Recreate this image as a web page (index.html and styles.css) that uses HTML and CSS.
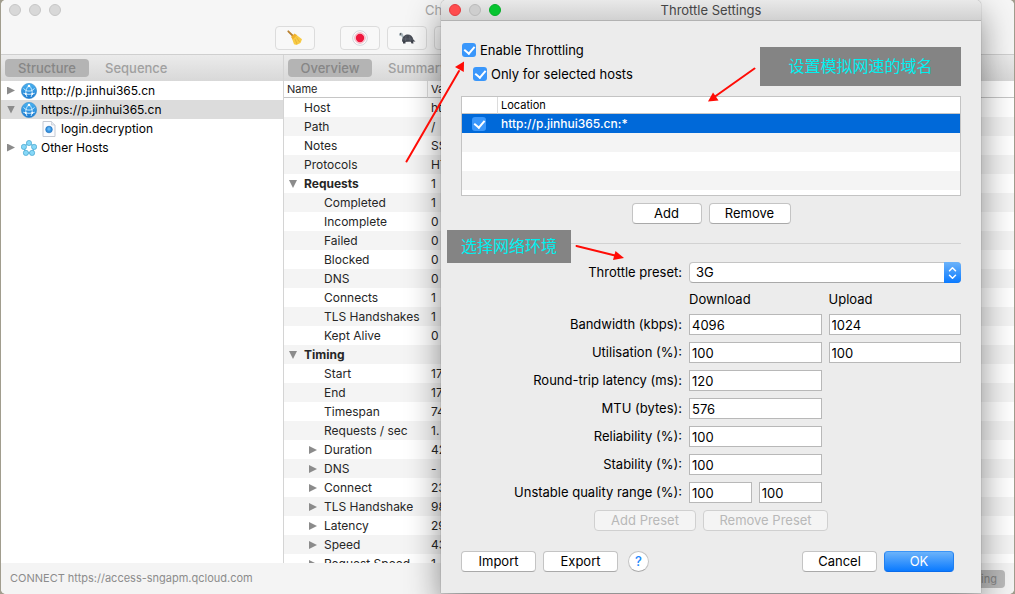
FILE: index.html
```
<!DOCTYPE html>
<html lang="en">
<head>
<meta charset="utf-8">
<title>Throttle Settings</title>
<link rel="stylesheet" href="styles.css">
</head>
<body>
<svg class="defs" aria-hidden="true">
  <defs>
    <linearGradient id="globeFill" x1="0" y1="0" x2="0" y2="1"><stop offset="0" stop-color="#49b4f2"/><stop offset="1" stop-color="#1c78cf"/></linearGradient>
    <symbol id="globe" viewBox="0 0 16 16">
      <circle cx="8" cy="8" r="7.600" fill="url(#globeFill)" stroke="#3b8ecb" stroke-width=".7"/>
      <g fill="none" stroke="#d6f0ff" stroke-width=".9">
        <path d="M7.500 3C5.400 5 4.600 8 4.800 11.500M8.500 3c2.100 2 2.900 5 2.700 8.500M2.200 10.200c3.500 1.500 8.100 1.500 11.600 0M5 7.500c2 .8 4 .8 6 0M2.500 5.500 5 7.500M13.500 5.500 11 7.500M5 11.500l1 2.500M11 11.500 10 14"/>
      </g>
      <g fill="#fff"><circle cx="8" cy="3" r="1.200"/><circle cx="4.800" cy="11" r="1"/><circle cx="11.200" cy="11" r="1"/></g>
    </symbol>
  </defs>
</svg>
<div class="stage">
  <main class="window">
    <header class="toolbar">
      <div class="titlebar">
        <span class="lights"><i class="light"></i><i class="light"></i><i class="light"></i></span>
        <span class="window-title">Charles</span>
      </div>
      <div class="tools">
        <button class="tool tool-first" aria-label="Clear">
          <svg width="16" height="16" viewBox="0 0 16 16"><path d="M1.300 1.300 6 6" stroke="#b9802f" stroke-width="1.800" stroke-linecap="round"/><path d="M5 8.500 9 4.600 15 9.300 13.500 13 9.500 15 7 14.300Z" fill="#f8cb45"/><path d="M4 7 7.600 3.500 9.900 5.200 5.800 9.500Z" fill="#f0b12c"/><path d="m8 9 2 5M9.600 7.500l3 4.500" stroke="#dca52e" stroke-width=".6"/></svg>
        </button>
        <button class="tool" aria-label="Record">
          <svg width="16" height="16" viewBox="0 0 16 16"><circle cx="8" cy="8" r="7.300" fill="#fff" stroke="#c6cbd3" stroke-width=".8"/><circle cx="8" cy="8" r="5.400" fill="#fbd4dc" stroke="#e798a8" stroke-width=".6"/><circle cx="8" cy="8" r="4.200" fill="#ef173d"/></svg>
        </button>
        <button class="tool" aria-label="Throttle">
          <svg width="18" height="16" viewBox="0 0 18 16"><path d="M1 4.500C1 2.400 4.500 2 5 4.300L6.300 8 4.800 8.500 3.500 6.200C2 6.300 1 5.800 1 4.500Z" fill="#aab7bd"/><circle cx="2.600" cy="4" r=".7" fill="#333"/><path d="M4 10.500C5 3 14 2.500 15.500 9.800L17.500 11.500 4.500 12Z" fill="#474b54"/><path d="M5 11h2.500v2.500H5zM12.500 11H15l.5 2.500h-2z" fill="#3d414a"/><path d="M5 9h10M8 5.500l-.5 5.500M11.500 5.500l.8 5.500" stroke="#666b75" stroke-width=".6"/></svg>
        </button>
        <button class="tool" aria-label="Breakpoints"></button>
      </div>
    </header>
    <div class="panes">
      <section class="pane tree-pane">
        <nav class="tabs"><button class="tab active">Structure</button><button class="tab">Sequence</button></nav>
        <ul class="tree">
          <li><i class="tri"></i><svg class="ico"><use href="#globe"/></svg>http://p.jinhui365.cn</li>
          <li class="picked"><i class="tri open"></i><svg class="ico"><use href="#globe"/></svg>https://p.jinhui365.cn</li>
          <li class="child"><svg class="ico" viewBox="0 0 16 16"><path d="M2 .5h8.500L14 4v11.500H2z" fill="#fbfcff" stroke="#c3c8d2"/><path d="M10.500.5V4H14" fill="#e6eaf2" stroke="#c3c8d2" stroke-width=".7"/><circle cx="8" cy="8.500" r="3.300" fill="#3793e0" stroke="#2372bd" stroke-width=".7"/><circle cx="8" cy="8" r="1.700" fill="#63b7f4"/></svg>login.decryption</li>
          <li><i class="tri"></i><svg class="ico" viewBox="0 0 16 16"><circle cx="8" cy="8.500" r="4.600" fill="none" stroke="#6fbfe2" stroke-width="1.500"/><g fill="#86d8f8" stroke="#4ba6cf" stroke-width=".7"><circle cx="8" cy="3" r="2.600"/><circle cx="2.900" cy="6.900" r="2.600"/><circle cx="13.100" cy="6.900" r="2.600"/><circle cx="4.900" cy="12.900" r="2.600"/><circle cx="11.100" cy="12.900" r="2.600"/></g></svg>Other Hosts</li>
        </ul>
      </section>
      <section class="pane info-pane">
        <nav class="tabs"><button class="tab active">Overview</button><button class="tab">Summary</button></nav>
        <div class="table-clip">
          <table class="info">
            <thead><tr><th>Name</th><th>Value</th></tr></thead>
            <tbody>
              <tr><td class="l1">Host</td><td>https</td></tr>
              <tr><td class="l1">Path</td><td>/</td></tr>
              <tr><td class="l1">Notes</td><td>SSL</td></tr>
              <tr><td class="l1">Protocols</td><td>HTTP</td></tr>
              <tr><td class="l1 group"><i class="tri open"></i>Requests</td><td>1</td></tr>
              <tr><td class="l2">Completed</td><td>1</td></tr>
              <tr><td class="l2">Incomplete</td><td>0</td></tr>
              <tr><td class="l2">Failed</td><td>0</td></tr>
              <tr><td class="l2">Blocked</td><td>0</td></tr>
              <tr><td class="l2">DNS</td><td>0</td></tr>
              <tr><td class="l2">Connects</td><td>1</td></tr>
              <tr><td class="l2">TLS Handshakes</td><td>1</td></tr>
              <tr><td class="l2">Kept Alive</td><td>0</td></tr>
              <tr><td class="l1 group"><i class="tri open"></i>Timing</td><td></td></tr>
              <tr><td class="l2">Start</td><td>17</td></tr>
              <tr><td class="l2">End</td><td>17</td></tr>
              <tr><td class="l2">Timespan</td><td>74</td></tr>
              <tr><td class="l2">Requests / sec</td><td>1.</td></tr>
              <tr><td class="l2"><i class="tri"></i>Duration</td><td>42</td></tr>
              <tr><td class="l2"><i class="tri"></i>DNS</td><td>-</td></tr>
              <tr><td class="l2"><i class="tri"></i>Connect</td><td>23</td></tr>
              <tr><td class="l2"><i class="tri"></i>TLS Handshake</td><td>98</td></tr>
              <tr><td class="l2"><i class="tri"></i>Latency</td><td>29</td></tr>
              <tr><td class="l2"><i class="tri"></i>Speed</td><td>43</td></tr>
              <tr><td class="l2"><i class="tri"></i>Request Speed</td><td>1</td></tr>
            </tbody>
          </table>
        </div>
      </section>
    </div>
    <footer class="status"><span>CONNECT https://access-sngapm.qcloud.com</span><span class="pill">Recording</span></footer>
  </main>

  <form class="dialog" role="dialog" aria-labelledby="dlg-title">
    <header class="dialog-bar">
      <span class="lights"><i class="light red"></i><i class="light"></i><i class="light green"></i></span>
      <h1 id="dlg-title">Throttle Settings</h1>
    </header>
    <div class="dialog-body">
      <label class="check"><input type="checkbox" checked>Enable Throttling</label>
      <label class="check nested"><input type="checkbox" checked>Only for selected hosts</label>
      <div class="hosts-box">
        <table class="hosts">
          <thead><tr><th></th><th>Location</th></tr></thead>
          <tbody>
            <tr class="chosen"><td><input type="checkbox" checked aria-label="http://p.jinhui365.cn:*"></td><td>http://p.jinhui365.cn:*</td></tr>
            <tr><td></td><td></td></tr><tr><td></td><td></td></tr><tr><td></td><td></td></tr>
          </tbody>
        </table>
      </div>
      <div class="row center"><button type="button" class="btn w-s">Add</button><button type="button" class="btn w-l">Remove</button></div>
      <hr>
      <div class="fields">
        <label for="preset">Throttle preset:</label>
        <div class="select"><select id="preset"><option>3G</option></select><span class="stepper"><svg width="9" height="14" viewBox="0 0 9 14" fill="none" stroke="#fff" stroke-width="1.500" stroke-linecap="round" stroke-linejoin="round"><path d="m1.500 4.700 3-3 3 3M1.500 9.300l3 3 3-3"/></svg></span></div>
        <span></span><span class="head">Download</span><span class="head">Upload</span>
        <label for="bw">Bandwidth (kbps):</label><input id="bw" value="4096"><input aria-label="Upload bandwidth" value="1024">
        <label for="ut">Utilisation (%):</label><input id="ut" value="100"><input aria-label="Upload utilisation" value="100">
        <label for="rt">Round-trip latency (ms):</label><input id="rt" value="120"><span></span>
        <label for="mtu">MTU (bytes):</label><input id="mtu" value="576"><span></span>
        <label for="rel">Reliability (%):</label><input id="rel" value="100"><span></span>
        <label for="st">Stability (%):</label><input id="st" value="100"><span></span>
        <label for="uq">Unstable quality range (%):</label><div class="pair"><input id="uq" value="100"><input aria-label="Range maximum" value="100"></div><span></span>
      </div>
      <div class="row center"><button type="button" class="btn w-xl" disabled>Add Preset</button><button type="button" class="btn w-xxl" disabled>Remove Preset</button></div>
      <div class="row actions">
        <button type="button" class="btn w-m">Import</button><button type="button" class="btn w-m">Export</button><button type="button" class="help">?</button>
        <span class="grow"></span>
        <button type="button" class="btn w-m">Cancel</button><button type="button" class="btn w-s primary">OK</button>
      </div>
    </div>
  </form>

  <div class="note note-hosts" lang="zh">设置模拟网速的域名</div>
  <div class="note note-preset" lang="zh">选择网络环境</div>
  <svg class="arrows" width="1015" height="594" viewBox="0 0 1015 594" aria-hidden="true">
    <g stroke="#ff0c06" stroke-width="2" stroke-linecap="round"><path d="M406.500 161.500 459 71M754.500 68.500 715 96.500M576.500 246 615 255.500"/></g>
    <g fill="#ff0c06"><path d="M464 61.500 463.800 72 455 67Z"/><path d="M708 101.500 713 92.500 718.500 100.500Z"/><path d="M624 258 615.500 251 613 260Z"/></g>
  </svg>
</div>
</body>
</html>
```
FILE: styles.css
```
* { box-sizing: border-box; }
body { margin: 0; background: #a19d8e; color: #262626; font: 13px/19px Inter, "Noto Sans CJK SC", sans-serif; }
button, input, select { font: inherit; color: inherit; margin: 0; }
.defs { position: absolute; width: 0; height: 0; }
.stage { position: relative; height: 100vh; overflow: hidden; padding: 0 1px; }

.window { display: flex; flex-direction: column; height: 100%; border-radius: 5px; overflow: hidden; background: #fff; }
.toolbar { flex: none; height: 55px; background: #f6f6f6; border-bottom: 1px solid #cfcfcf; }
.titlebar { display: flex; align-items: center; height: 20px; padding-left: 8px; }
.lights { display: flex; gap: 8px; }
.light { width: 12px; height: 12px; border-radius: 50%; background: #d8d8d8; border: 1px solid #c6c6c6; }
.light.red { background: #ff4c4e; border-color: #e2393e; }
.light.green { background: #06c530; border-color: #05ad29; }
.window-title { margin-left: 364px; color: #a6a6a6; }
.tools { display: flex; gap: 7px; padding: 6px 0 0 274px; }
.tool { display: grid; place-items: center; width: 40px; height: 24px; padding: 0; border: 1px solid #dcdcdc; border-radius: 4px; background: #f8f8f8; }
.tool-first { margin-right: 18px; }

.panes { display: flex; flex: 1; min-height: 0; }
.pane { display: flex; flex-direction: column; min-width: 0; }
.tree-pane { flex: none; width: 283px; border-right: 1px solid #d4d4d4; }
.info-pane { flex: 1; }
.tabs { display: flex; flex: none; align-items: center; gap: 6px; height: 26px; padding-left: 4px; background: linear-gradient(#ebebeb, #d8d8d8); }
.tab { height: 18px; padding: 0 10px; border: 0; border-radius: 4px; background: none; color: #a0a0a0; font-weight: 500; line-height: 18px; }
.tab.active { min-width: 84px; background: #b4b4b4; color: #868686; }

.tree { margin: 0; padding: 0; list-style: none; color: #000; font-size: 12px; }
.tree li { display: flex; align-items: center; height: 19px; padding-left: 6px; }
.tree .picked { background: #dcdcdc; }
.tree .child { padding-left: 40px; }
.ico { width: 16px; height: 16px; margin-right: 4px; }
.tree .tri { margin-right: 6px; }
.tri { display: inline-block; width: 8px; height: 8px; background: #8b8b8b; clip-path: polygon(0 0, 100% 50%, 0 100%); }
.tri.open { clip-path: polygon(0 0, 100% 0, 50% 100%); }

.table-clip { flex: 1; min-height: 0; overflow: hidden; }
table { width: 100%; border-collapse: separate; border-spacing: 0; table-layout: fixed; font-size: 12px; }
th { font-weight: 400; text-align: left; padding: 0; }
td { height: 19px; padding: 0; white-space: nowrap; }
.info th, .hosts th { height: 17px; padding-left: 3px; border-bottom: 1px solid #c6c6c6; font-size: 11px; line-height: 16px; }
.info th:first-child { width: 144px; border-right: 1px solid #dcdcdc; }
.info tr:nth-child(even) td, .hosts tr:nth-child(even) td { background: #f4f4f4; }
.info td:last-child { padding-left: 3px; }
.info .l1 { padding-left: 20px; }
.info .l2 { padding-left: 40px; }
.group { font-weight: 700; }
.info .tri { margin: 0 7px 0 -15px; }

.status { display: flex; flex: none; align-items: center; justify-content: space-between; height: 31px; padding: 0 9px; background: #f4f4f4; color: #8c8c8c; font-size: 11px; }
.pill { height: 18px; padding: 0 8px; border-radius: 4px; background: #bbb; color: #858585; line-height: 18px; }

.dialog { position: absolute; top: 0; left: 441px; width: 540px; border-radius: 5px 5px 0 0; background: #ececec; color: #000; box-shadow: 0 14px 34px rgba(0, 0, 0, .45), 0 0 1px rgba(0, 0, 0, .6); }
.dialog-bar { display: grid; grid-template-columns: 1fr auto 1fr; align-items: center; height: 21px; padding: 0 8px; border-radius: 5px 5px 0 0; border-bottom: 1px solid #b2b2b2; background: linear-gradient(#e9e9e9, #d1d1d1); }
.dialog-bar .light:nth-child(2) { background: #cecece; border-color: #bababa; }
.dialog h1 { margin: 0; color: #454545; font-size: 13px; font-weight: 400; }
.dialog-body { padding: 17px 20px 21px; }

.check { display: flex; align-items: center; gap: 4px; height: 24px; padding-left: 1px; }
.check.nested { padding-left: 12px; }
input[type="checkbox"] { display: grid; place-items: center; flex: none; appearance: none; width: 14px; height: 14px; border-radius: 3px; background: #3a97fb; }
input[type="checkbox"]::after { content: ""; width: 5px; height: 8px; margin-bottom: 2px; border: solid #fff; border-width: 0 2px 2px 0; transform: rotate(40deg); }

.hosts-box { height: 100px; margin-top: 10px; overflow: hidden; border: 1px solid #c3c3c3; background: #fff; }
.hosts th:first-child { width: 36px; border-right: 1px solid #dcdcdc; }
.hosts td:first-child { padding-left: 10px; }
.hosts td:last-child { padding-left: 3px; }
.hosts .chosen td { background: #0069d9; color: #fff; font-weight: 500; }

.row { display: flex; gap: 7px; }
.center { justify-content: center; margin-top: 7px; }
.btn { height: 21px; padding: 0; border: 1px solid #c4c4c4; border-bottom-color: #a9a9a9; border-radius: 4px; background: #fff; line-height: 19px; }
.btn:disabled { border-color: #d0d0d0; background: #f4f4f4; color: #b8b8b8; }
.primary { border-color: #3a94f7 #2180f0 #0a6bea; background: linear-gradient(#6cb3fa, #0a7aff); color: #fff; }
.w-s { width: 70px; }
.w-m { width: 75px; }
.w-l { width: 82px; }
.w-xl { width: 102px; }
.w-xxl { width: 125px; }
hr { height: 1px; margin: 19px 0 18px; border: 0; background: #d2d2d2; }

.fields { display: grid; grid-template-columns: 221px 1fr 1fr; gap: 7px; }
.fields label { text-align: right; line-height: 21px; white-space: nowrap; }
.head { height: 17px; line-height: 18px; }
.fields input { width: 100%; min-width: 0; height: 21px; padding: 1px 2px 0; border: 1px solid #b8b8b8; border-radius: 0; background: #fff; }
.select { grid-column: span 2; display: grid; grid-template-columns: 1fr 17px; height: 21px; }
.select select { grid-column: 1 / 3; grid-row: 1; appearance: none; height: 21px; padding: 0 6px; border: 1px solid #c4c4c4; border-bottom-color: #a9a9a9; border-radius: 4px; background: #fff; line-height: 19px; }
.stepper { grid-column: 2; grid-row: 1; z-index: 1; display: grid; place-items: center; border-radius: 0 4px 4px 0; background: linear-gradient(#6cb3fa, #0a7aff); pointer-events: none; }
.pair { display: grid; grid-template-columns: 1fr 1fr; gap: 7px; }
.actions { align-items: center; margin-top: 20px; padding-right: 7px; }
.help { width: 21px; height: 21px; margin-left: 3px; padding: 0; border: 1px solid #c4c4c4; border-bottom-color: #a9a9a9; border-radius: 50%; background: #fff; color: #1a86fb; font-weight: 500; line-height: 19px; }
.grow { flex: 1; }

.note { position: absolute; display: grid; place-items: center; padding-bottom: 3px; background: #848484; color: #00f0f0; font: 16px/24px "Noto Sans CJK SC", sans-serif; }
.note-hosts { left: 760px; top: 47px; width: 201px; height: 39px; }
.note-preset { left: 447px; top: 230px; width: 124px; height: 33px; }
.arrows { position: absolute; left: 0; top: 0; pointer-events: none; }
```
